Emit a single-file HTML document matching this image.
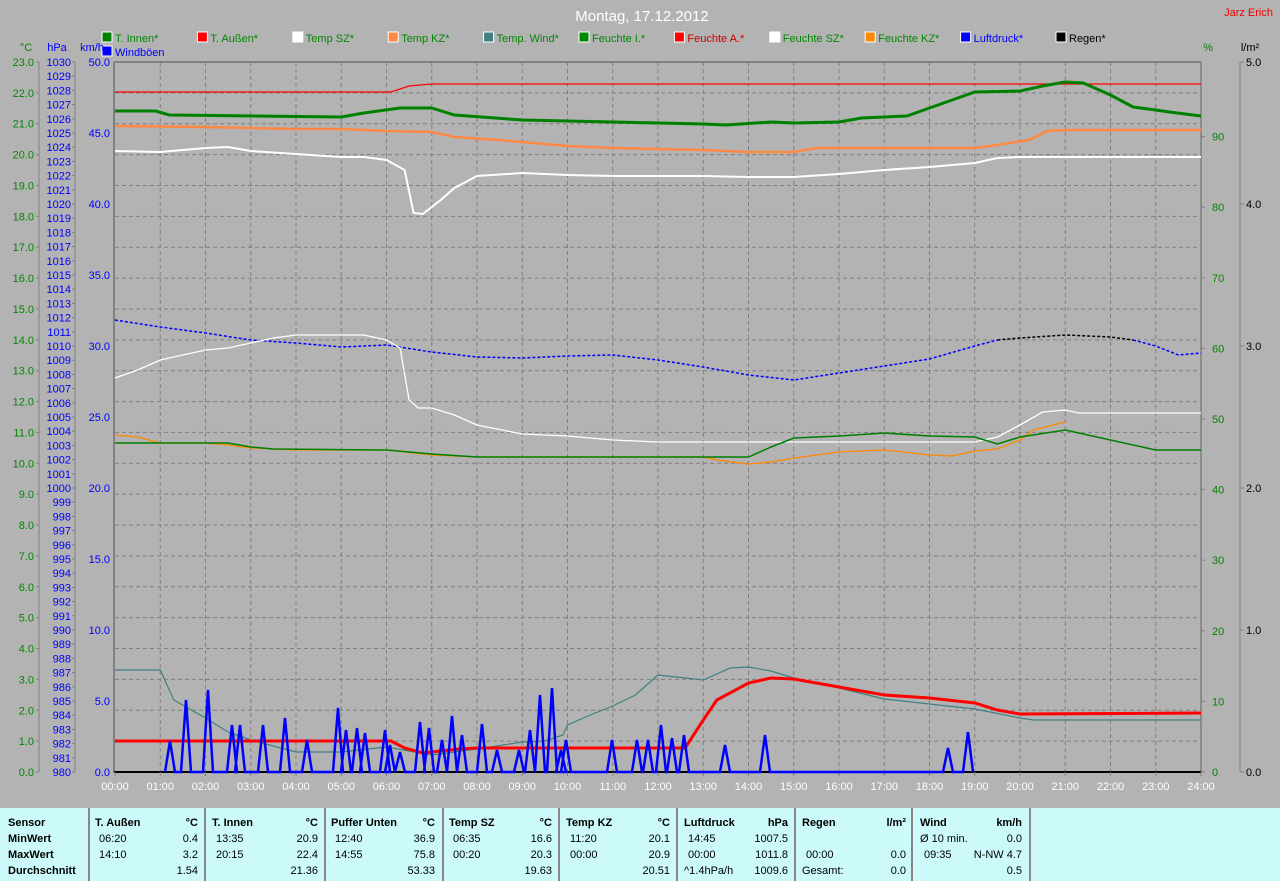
<!DOCTYPE html>
<html><head><meta charset="utf-8"><style>
body{margin:0;width:1280px;height:881px;background:#b3b3b3;overflow:hidden;font-family:"Liberation Sans",sans-serif}
#tbl{position:absolute;left:0;top:808px;width:1280px;height:73px;background:#ccfafa;font-size:11px}
.c{position:absolute;top:0;height:73px;border-left:2px solid #888}
.t{position:absolute;white-space:nowrap}
.b{font-weight:bold}
</style></head><body>
<svg id="s" width="1280" height="808" style="position:absolute;left:0;top:0" font-family="Liberation Sans, sans-serif"></svg>
<div id="tbl"></div>
<script>
const S=document.getElementById('s');let h='';
const X=t=>115+45.25*t;
h+='<text x="642" y="21" fill="#fff" font-size="15" text-anchor="middle">Montag, 17.12.2012</text>';
h+='<text x="1273" y="16" fill="#e00" font-size="11" text-anchor="end">Jarz Erich</text>';
const leg=[["T. Innen*","#008000","#080"],["T. Außen*","#f00","#080"],["Temp SZ*","#fff","#080"],["Temp KZ*","#f84","#080"],["Temp. Wind*","#408080","#080"],["Feuchte I.*","#080","#080"],["Feuchte A.*","#f00","#c00"],["Feuchte SZ*","#fff","#080"],["Feuchte KZ*","#f80","#080"],["Luftdruck*","#00f","#00f"],["Regen*","#000","#000"]];
leg.forEach((l,i)=>{let x=124+i*95.4;h+=`<rect x="${x-22}" y="32" width="10" height="10" fill="${l[1]}" stroke="#fff"/><text x="${x-9}" y="42" fill="${l[2]}" font-size="11">${l[0]}</text>`;});
h+=`<rect x="102" y="46" width="10" height="10" fill="#00f" stroke="#fff"/><text x="115" y="56" fill="#00f" font-size="11">Windböen</text>`;
h+='<text x="26" y="51" fill="#080" font-size="11" text-anchor="middle">°C</text><text x="57" y="51" fill="#00f" font-size="11" text-anchor="middle">hPa</text><text x="92" y="51" fill="#00f" font-size="11" text-anchor="middle">km/h</text>';
h+='<text x="1208" y="51" fill="#080" font-size="11" text-anchor="middle">%</text><text x="1250" y="51" fill="#000" font-size="11" text-anchor="middle">l/m²</text>';
// grid
for(let k=1;k<23;k++){let y=62+k*710/23;h+=`<line x1="115" x2="1200" y1="${y}" y2="${y}" stroke="#808080" stroke-dasharray="4,3"/>`;}
for(let k=1;k<24;k++){h+=`<line x1="${X(k)}" x2="${X(k)}" y1="62" y2="772" stroke="#808080" stroke-dasharray="4,3"/>`;}
h+='<line x1="114" x2="1201" y1="62" y2="62" stroke="#808080" stroke-width="2"/><line x1="114" x2="114" y1="62" y2="772" stroke="#808080" stroke-width="2"/><line x1="1201" x2="1201" y1="62" y2="772" stroke="#666"/><line x1="114" x2="1201" y1="772" y2="772" stroke="#000" stroke-width="2"/>';
// left axes
h+='<line x1="39" x2="39" y1="62" y2="772" stroke="#808080"/><line x1="75" x2="75" y1="62" y2="772" stroke="#808080"/><line x1="1240" x2="1240" y1="62" y2="772" stroke="#808080"/>';
for(let k=0;k<=23;k++){let y=62+k*710/23;h+=`<text x="34" y="${y+4}" fill="#080" font-size="11" text-anchor="end">${(23-k).toFixed(1)}</text><line x1="36" x2="39" y1="${y}" y2="${y}" stroke="#808080"/>`;}
for(let k=0;k<=50;k++){let y=62+k*14.2;h+=`<text x="71" y="${y+4}" fill="#00f" font-size="11" text-anchor="end">${1030-k}</text><line x1="72" x2="75" y1="${y}" y2="${y}" stroke="#808080"/>`;}
for(let k=0;k<=10;k++){let y=62+k*71;h+=`<text x="110" y="${y+4}" fill="#00f" font-size="11" text-anchor="end">${(50-5*k).toFixed(1)}</text>`;}
for(let k=0;k<=10;k++){let y=772-k*70.6-(k?0:0);if(k%1==0&&k<=9)h+=`<text x="1212" y="${y+4}" fill="#080" font-size="11">${k*10}</text><line x1="1201" x2="1205" y1="${y}" y2="${y}" stroke="#808080"/>`;}
for(let k=0;k<=5;k++){let y=772-k*142;h+=`<text x="1246" y="${y+4}" fill="#000" font-size="11">${k.toFixed(1)}</text><line x1="1240" x2="1244" y1="${y}" y2="${y}" stroke="#808080"/>`;}
for(let k=0;k<=24;k++){h+=`<text x="${X(k)}" y="790" fill="#fff" font-size="11" text-anchor="middle">${String(k).padStart(2,'0')}:00</text><line x1="${X(k)}" x2="${X(k)}" y1="772" y2="776" stroke="#808080"/>`;}
function L(a,c,w,d){let p=[];for(let i=0;i<a.length;i+=2)p.push(X(a[i]).toFixed(1)+','+a[i+1]);h+=`<polyline points="${p.join(' ')}" fill="none" stroke="${c}" stroke-width="${w}" ${d?'stroke-dasharray="'+d+'"':''}/>`;}
L([0,92,6.05,92],"#333",1);
L([0,92,6.1,92,6.5,86,7,84,24,84],"#f00",1.3);
L([0,111,0.9,111,1.2,115,5,117,5.5,113,6.3,108,7,108,7.5,115,9,120,11,122,13,124,13.5,125,14.5,122,15,123,16,122,16.5,118,17.5,116,18,108,18.5,100,19,92,20,91,20.5,86,21,82,21.4,83,22,95,22.5,107,23,110,23.3,112,24,116],"#008000",3);
L([0,126,2,127,4,129,5,129,6,131,7,132,7.5,137,8.5,140,9.5,144,10,146,11,148,13,150,14,152,15,152,15.5,148,17,148,19,148,19.5,145,20.2,140,20.6,131,21,130,24,130],"#f84",2.5);
L([0,151,1,152,2,148,2.5,147,3,151,4,154,5,157,5.5,157,6,160,6.4,170,6.6,213,6.8,214,7.2,200,7.5,188,8,176,9,173,10,175,11,176,13,176,14,177,15,177,16,174,17,170,18,167,19,163,19.5,158,20,157,24,157],"#fff",2);
L([0,320,1,327,2,333,3,340,4,343,5,347,6,345,7,352,8,357,9,358,10,356,11,355,12,360,13,367,14,375,15,380,16,373,17,366,18,359,19,346,19.5,340],"#00f",1.5,"3,2");
L([19.5,340,20,338,21,335,22,337,22.5,340],"#000",1.5,"3,2");
L([22.5,340,23,346,23.5,355,24,353],"#00f",1.5,"3,2");
L([0,378,0.5,370,1,360,2,350,2.5,348,3,343,3.5,338,4,335,5.5,335,6,340,6.3,348,6.5,400,6.7,408,7,408,7.5,415,8,425,9,434,10,436,11,440,12,442,19,442,19.5,437,20,425,20.5,412,21,410,21.3,413,24,413],"#fff",1.3);
L([0,435,0.5,437,1,443,2,443,2.5,445,3,448,4,450,6,450,7,455,8,457,13,457,13.3,460,14,464,14.5,462,15,458,16,452,17,450,18,455,18.5,456,19,451,19.5,449,20,440,20.3,430,21,422],"#f80",1.3);
L([0,443,2.5,443,3,447,3.5,449,6,450,7,454,8,457,14,457,14.5,447,15,438,16,436,17,433,18,436,19,437,19.5,444,20,437,21,430,22,440,23,450,24,450],"#008000",1.5);
L([0,670,1,670,1.1,680,1.3,700,2,718,2.5,732,3,740,4,752,5,752,6,747,7,755,8,749,9,742,9.5,741,9.9,735,10,725,10.5,715,11,706,11.5,695,12,675,13,680,13.6,668,14,667,14.5,671,15,678,16,688,17,699,18,704,19,709,20,718,20.3,720,24,720],"#408080",1.2);
L([0,741,6.1,741,6.4,748,6.8,753,7.2,751,7.6,749,8,748,12.6,748,13,720,13.3,700,14,683,14.5,678,15,679,16,687,17,695,18,698,19,703,19.5,710,20,714,24,713],"#f00",3);
let sp=[[170,741],[186,700],[208,690],[232,725],[240,725],[263,725],[285,718],[307,740],[338,708],[346,730],[357,728],[365,733],[385,730],[390,745],[400,752],[420,722],[429,728],[442,740],[452,716],[462,735],[482,724],[497,750],[519,750],[530,730],[540,695],[552,688],[561,750],[566,740],[612,740],[637,740],[648,740],[661,725],[672,738],[684,735],[725,745],[765,735],[948,748],[968,732]];
let p=[];sp.forEach(s=>{p.push((s[0]-5)+',772',s[0]+','+s[1],(s[0]+5)+',772')});
h+=`<polyline points="${p.join(' ')}" fill="none" stroke="#00f" stroke-width="2.5"/>`;
S.innerHTML=h;
// table
const T=document.getElementById('tbl');let q='';
[88,204,324,442,558,676,794,911,1029].forEach(x=>q+=`<div class="c" style="left:${x}px"></div>`);
const R=[9,25,41,57];
["Sensor","MinWert","MaxWert","Durchschnitt"].forEach((s,i)=>q+=`<div class="t b" style="left:8px;top:${R[i]}px">${s}</div>`);
const cols=[[95,198,"T. Außen","°C",["06:20","14:10",""],["0.4","3.2","1.54"]],[212,318,"T. Innen","°C",["13:35","20:15",""],["20.9","22.4","21.36"]],[331,435,"Puffer Unten","°C",["12:40","14:55",""],["36.9","75.8","53.33"]],[449,552,"Temp SZ","°C",["06:35","00:20",""],["16.6","20.3","19.63"]],[566,670,"Temp KZ","°C",["11:20","00:00",""],["20.1","20.9","20.51"]],[684,788,"Luftdruck","hPa",["14:45","00:00","^1.4hPa/h"],["1007.5","1011.8","1009.6"]],[802,906,"Regen","l/m²",["","00:00","Gesamt:"],["","0.0","0.0"]],[920,1022,"Wind","km/h",["Ø 10 min.","09:35",""],["0.0","N-NW 4.7","0.5"]]];
cols.forEach(c=>{q+=`<div class="t b" style="left:${c[0]}px;top:9px">${c[2]}</div><div class="t b" style="right:${1280-c[1]}px;top:9px">${c[3]}</div>`;
for(let i=0;i<3;i++){q+=`<div class="t" style="left:${c[0]+(c[4][i].match(/^\d/)?4:0)}px;top:${R[i+1]}px">${c[4][i]}</div><div class="t" style="right:${1280-c[1]}px;top:${R[i+1]}px">${c[5][i]}</div>`;}});
T.innerHTML=q;
</script>
</body></html>
